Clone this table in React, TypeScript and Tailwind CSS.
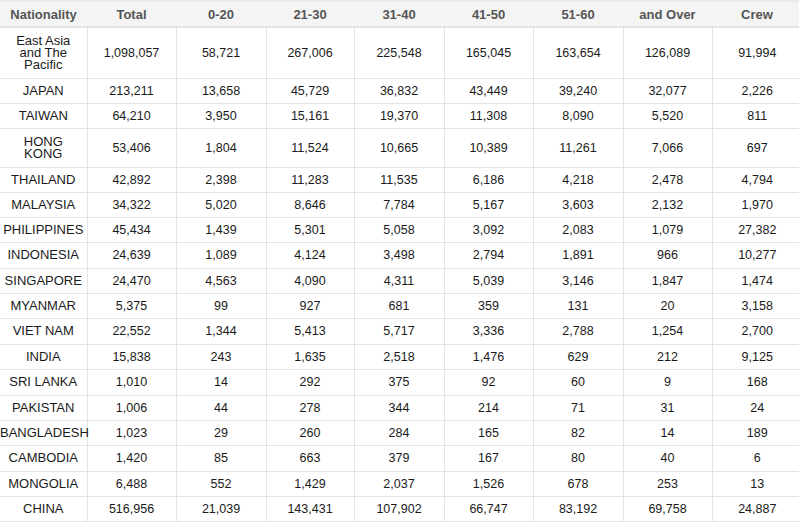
import React from "react";

type Row = { name: string[]; vals: string[]; h: number };

const rows: Row[] = [
  { name: ["East Asia", "and The", "Pacific"], vals: ["1,098,057", "58,721", "267,006", "225,548", "165,045", "163,654", "126,089", "91,994"], h: 51 },
  { name: ["JAPAN"], vals: ["213,211", "13,658", "45,729", "36,832", "43,449", "39,240", "32,077", "2,226"], h: 25 },
  { name: ["TAIWAN"], vals: ["64,210", "3,950", "15,161", "19,370", "11,308", "8,090", "5,520", "811"], h: 25 },
  { name: ["HONG", "KONG"], vals: ["53,406", "1,804", "11,524", "10,665", "10,389", "11,261", "7,066", "697"], h: 39 },
  { name: ["THAILAND"], vals: ["42,892", "2,398", "11,283", "11,535", "6,186", "4,218", "2,478", "4,794"], h: 25 },
  { name: ["MALAYSIA"], vals: ["34,322", "5,020", "8,646", "7,784", "5,167", "3,603", "2,132", "1,970"], h: 25 },
  { name: ["PHILIPPINES"], vals: ["45,434", "1,439", "5,301", "5,058", "3,092", "2,083", "1,079", "27,382"], h: 25 },
  { name: ["INDONESIA"], vals: ["24,639", "1,089", "4,124", "3,498", "2,794", "1,891", "966", "10,277"], h: 26 },
  { name: ["SINGAPORE"], vals: ["24,470", "4,563", "4,090", "4,311", "5,039", "3,146", "1,847", "1,474"], h: 25 },
  { name: ["MYANMAR"], vals: ["5,375", "99", "927", "681", "359", "131", "20", "3,158"], h: 25 },
  { name: ["VIET NAM"], vals: ["22,552", "1,344", "5,413", "5,717", "3,336", "2,788", "1,254", "2,700"], h: 26 },
  { name: ["INDIA"], vals: ["15,838", "243", "1,635", "2,518", "1,476", "629", "212", "9,125"], h: 25 },
  { name: ["SRI LANKA"], vals: ["1,010", "14", "292", "375", "92", "60", "9", "168"], h: 26 },
  { name: ["PAKISTAN"], vals: ["1,006", "44", "278", "344", "214", "71", "31", "24"], h: 25 },
  { name: ["BANGLADESH"], vals: ["1,023", "29", "260", "284", "165", "82", "14", "189"], h: 25 },
  { name: ["CAMBODIA"], vals: ["1,420", "85", "663", "379", "167", "80", "40", "6"], h: 26 },
  { name: ["MONGOLIA"], vals: ["6,488", "552", "1,429", "2,037", "1,526", "678", "253", "13"], h: 25 },
  { name: ["CHINA"], vals: ["516,956", "21,039", "143,431", "107,902", "66,747", "83,192", "69,758", "24,887"], h: 25 },
];

const headers = ["Nationality", "Total", "0-20", "21-30", "31-40", "41-50", "51-60", "and Over", "Crew"];
const widths = [87, 89, 90, 88, 90, 89, 90, 89, 90];

export default function App() {
  return (
    <div className="w-[799px] h-[523px] overflow-hidden bg-white" style={{ fontFamily: '"Liberation Sans", Arial, sans-serif' }}>
      <table className="table-fixed border-collapse w-[802px] text-[#1a1a1a]">
        <colgroup>
          {widths.map((w, i) => (
            <col key={i} style={{ width: w }} />
          ))}
        </colgroup>
        <thead>
          <tr className="h-[26px] bg-[#f4f4f4] border-t-2 border-t-[#ebebeb] border-b-2 border-b-[#e4e4e4]">
            {headers.map((h) => (
              <th key={h} className="p-0 text-center align-middle text-[13px] font-bold text-[#555] leading-[15px]">
                {h}
              </th>
            ))}
          </tr>
        </thead>
        <tbody>
          {rows.map((r, ri) => (
            <tr key={ri} style={{ height: r.h }}>
              <td className="p-0 text-center align-middle text-[13px] leading-[12px] border border-[#e4e4e4] border-l-0">
                {r.name.map((n, i) => (
                  <div key={i}>{n}</div>
                ))}
              </td>
              {r.vals.map((v, vi) => (
                <td
                  key={vi}
                  className={
                    vi === r.vals.length - 1
                      ? "p-0 text-center align-middle text-[12.5px] leading-[14px] border border-[#e4e4e4] border-r-0"
                      : "p-0 text-center align-middle text-[12.5px] leading-[14px] border border-[#e4e4e4]"
                  }
                >
                  {v}
                </td>
              ))}
            </tr>
          ))}
        </tbody>
      </table>
    </div>
  );
}
